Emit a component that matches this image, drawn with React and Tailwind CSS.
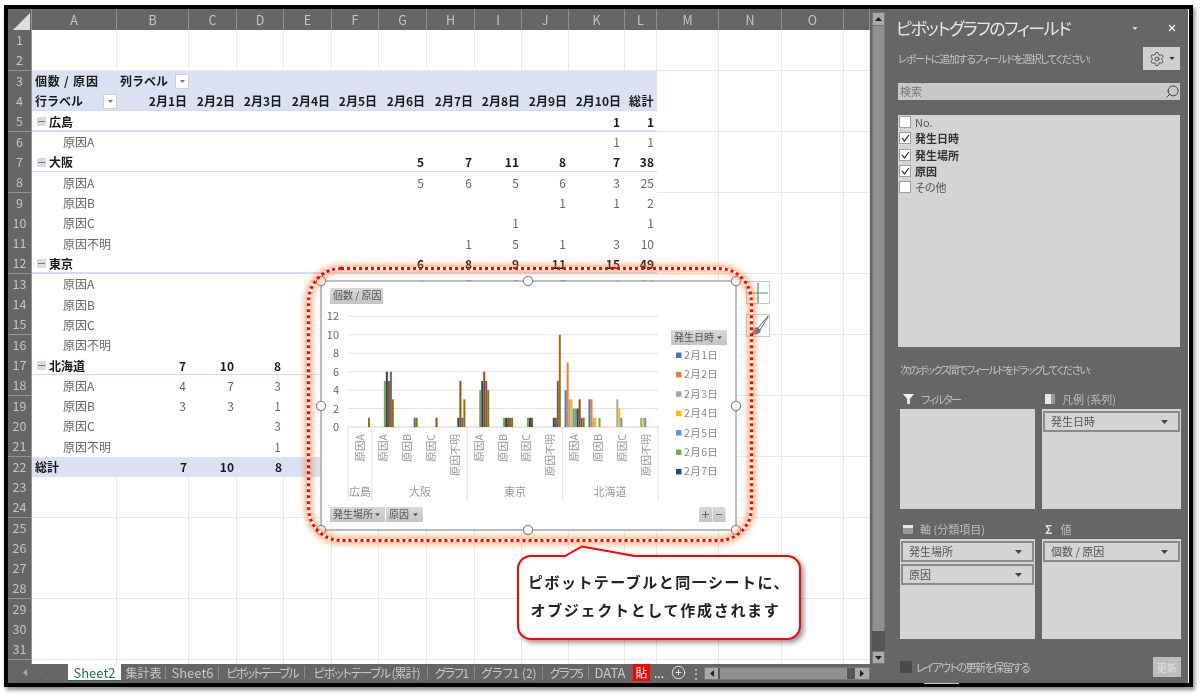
import React from "react";
import { Settings, Search, X, CirclePlus } from "lucide-react";

const COLS = "grid-cols-[24px_85px_72px_48px_47px_48px_47px_48px_48px_47px_47px_56px_32px_62px_63px_62px_26px]";
const LETTERS = ["A","B","C","D","E","F","G","H","I","J","K","L","M","N","O",""];
const DATES = ["2月1日","2月2日","2月3日","2月4日","2月5日","2月6日","2月7日","2月8日","2月9日","2月10日"];

const ROWS = {
  5: { group: "広島", v: { K: 1, L: 1 } },
  6: { item: "原因A", v: { K: 1, L: 1 } },
  7: { group: "大阪", v: { G: 5, H: 7, I: 11, J: 8, K: 7, L: 38 } },
  8: { item: "原因A", v: { G: 5, H: 6, I: 5, J: 6, K: 3, L: 25 } },
  9: { item: "原因B", v: { J: 1, K: 1, L: 2 } },
  10: { item: "原因C", v: { I: 1, L: 1 } },
  11: { item: "原因不明", v: { H: 1, I: 5, J: 1, K: 3, L: 10 } },
  12: { group: "東京", v: { G: 6, H: 8, I: 9, J: 11, K: 15, L: 49 } },
  13: { item: "原因A", v: { G: 4, H: 5, I: 6, J: 5, K: 4, L: 24 } },
  14: { item: "原因B", v: {} },
  15: { item: "原因C", v: {} },
  16: { item: "原因不明", v: {} },
  17: { group: "北海道", v: { B: 7, C: 10, D: 8 } },
  18: { item: "原因A", v: { B: 4, C: 7, D: 3 } },
  19: { item: "原因B", v: { B: 3, C: 3, D: 1 } },
  20: { item: "原因C", v: { D: 3 } },
  21: { item: "原因不明", v: { D: 1 } },
};

function Tri({ fill = "#444", w = 7, h = 4 }) {
  return (
    <svg width={w} height={h} viewBox="0 0 7 4" className="shrink-0">
      <path d="M0 0h7L3.5 4z" fill={fill} />
    </svg>
  );
}

function PivotDrop() {
  return (
    <div className="w-[14px] h-[15px] bg-white border border-[#d0d0d0] flex items-center justify-center ml-auto">
      <Tri fill="#777" w={5} h={3} />
    </div>
  );
}

function pivotCell(n, c) {
  const letter = LETTERS[c];
  const bg = n === 3 || n === 4 || n === 22 ? "bg-[#d9e1f2]" : "bg-white";
  const line = n === 4 || n === 5 || n === 7 || n === 12 || n === 17 ? "shadow-[inset_0_-2px_0_#cfdcf3]" : "";
  const base = `${bg} ${line} flex items-center whitespace-nowrap overflow-visible`;
  let body = null;
  if (n === 3 && c === 0) body = <span className="pl-[3px] font-bold text-[#1a1a1a] tracking-[0.8px]">個数 / 原因</span>;
  else if (n === 3 && c === 1) body = <><span className="pl-[3px] font-bold text-[#1a1a1a]">列ラベル</span><PivotDrop /></>;
  else if (n === 4 && c === 0) body = <><span className="pl-[3px] font-bold text-[#1a1a1a]">行ラベル</span><PivotDrop /></>;
  else if (n === 4 && c >= 1 && c <= 10) body = <span className={`ml-auto font-bold text-[#1a1a1a] ${c === 10 ? "pr-[4px]" : "pr-[2px]"}`}>{DATES[c - 1]}</span>;
  else if (n === 4 && c === 11) body = <span className="ml-auto pr-[3px] font-bold text-[#1a1a1a] tracking-[0.5px]">総計</span>;
  else if (n === 22 && c === 0) body = <span className="pl-[3px] font-bold text-[#1a1a1a]">総計</span>;
  else if (n === 22 && c === 1) body = <span className="ml-auto pr-[2px] font-bold text-[#1a1a1a]">7</span>;
  else if (n === 22 && c === 2) body = <span className="ml-auto pr-[3px] font-bold text-[#1a1a1a]">10</span>;
  else if (n === 22 && c === 3) body = <span className="ml-auto pr-[2px] font-bold text-[#1a1a1a]">8</span>;
  else if (ROWS[n]) {
    const r = ROWS[n];
    if (c === 0 && r.group) {
      body = (
        <>
          <span className="ml-[5px] mr-[3px] w-[9px] h-[9px] bg-[#d5dce6] flex items-center justify-center">
            <span className="w-[7px] h-px bg-[#777]" />
          </span>
          <span className="font-bold text-[#1a1a1a]">{r.group}</span>
        </>
      );
    } else if (c === 0) {
      body = <span className="pl-[31px] text-[#666]">{r.item}</span>;
    } else if (r.v[letter] !== undefined) {
      const pad = c === 10 ? "pr-[5px]" : "pr-[3px]";
      body = <span className={`ml-auto ${pad} ${r.group ? "font-bold text-[#1a1a1a]" : "text-[#666]"}`}>{r.v[letter]}</span>;
    }
  }
  return <div key={c} className={base}>{body}</div>;
}

function SheetRow({ n }) {
  return (
    <div className={`grid ${COLS} h-[20.32px] shrink-0 text-[12px] leading-[20px]`}>
      <div className="bg-[#666] border-b border-r border-[#949494] text-[#c4c4c4] text-[12.5px] flex items-center justify-center">
        {n <= 31 ? n : ""}
      </div>
      {LETTERS.map((_, c) =>
        n >= 3 && n <= 22 && c <= 11 ? (
          pivotCell(n, c)
        ) : (
          <div key={c} className="bg-white border-b border-r border-[#e9e9e9]" />
        )
      )}
    </div>
  );
}

function Sheet() {
  const rows = [];
  for (let n = 1; n <= 32; n++) rows.push(<SheetRow key={n} n={n} />);
  return (
    <div className="w-[862px] h-[655px] overflow-hidden flex flex-col">
      <div className={`grid ${COLS} h-[21px] shrink-0 text-[12.5px] text-[#c4c4c4] leading-[21px]`}>
        <div className="bg-[#666] border-r border-[#949494] flex items-end justify-end pr-px">
          <svg width="17" height="17" viewBox="0 0 17 17"><path d="M17 0v17H0z" fill="#dedede" /></svg>
        </div>
        {LETTERS.map((l, i) => (
          <div key={i} className="bg-[#666] border-r border-[#8e8e8e] text-center">{l}</div>
        ))}
      </div>
      {rows}
    </div>
  );
}

function VScroll() {
  return (
    <div className="w-[18px] h-[655px] bg-[#666] pl-[2px] pr-[3px] flex flex-col">
      <div className="h-[14px] mt-[3px] bg-[#a9a9a9] flex items-center justify-center border border-[#777]">
        <svg width="7" height="4" viewBox="0 0 7 4"><path d="M0 4h7L3.5 0z" fill="#222" /></svg>
      </div>
      <div className="h-[605px] bg-[#909090] border-x border-[#777]" />
      <div className="h-[20px] bg-[#565656]" />
      <div className="h-[13px] bg-[#a9a9a9] flex items-center justify-center border border-[#777]">
        <Tri fill="#222" />
      </div>
    </div>
  );
}

const TABS = [
  { t: "集計表", c: "w-[45px] text-[12px]" },
  { t: "Sheet6", c: "w-[53px] text-[13px]" },
  { t: "ピボットテーブル", c: "w-[86px] text-[12px] tracking-[-1.7px]" },
  { t: "ピボットテーブル (累計)", c: "w-[123px] text-[12px] tracking-[-1.1px]" },
  { t: "グラフ1", c: "w-[47px] text-[12px] tracking-[-1.2px]" },
  { t: "グラフ1 (2)", c: "w-[68px] text-[12px]" },
  { t: "グラフ5", c: "w-[46px] text-[12px] tracking-[-1.4px]" },
  { t: "DATA", c: "w-[42px] text-[13px]" },
];

function TabBar() {
  return (
    <div className="h-[19px] bg-[#666] flex items-start leading-[17px] text-[#c8c8c8] [font-feature-settings:'palt']">
      <div className="w-[60px] shrink-0 h-[17px] flex items-center pl-[15px] gap-[13px]">
        <svg width="4" height="7" viewBox="0 0 4 7"><path d="M4 0v7L0 3.5z" fill="#aaa" /></svg>
        <svg width="4" height="7" viewBox="0 0 4 7"><path d="M0 0v7l4-3.5z" fill="#2f8f55" /></svg>
      </div>
      <div className="w-[53px] shrink-0 h-[17px] bg-white text-[#217346] text-[13px] text-center border-b border-[#217346]">Sheet2</div>
      {TABS.map((tab, i) => (
        <div key={tab.t} className={`${tab.c} shrink-0 h-[17px] flex items-center justify-center relative whitespace-nowrap`}>
          <span>{tab.t}</span>
          {i < TABS.length - 1 && <span className="absolute right-0 top-[2px] w-px h-[13px] bg-[#8a8a8a]" />}
        </div>
      ))}
      <span className="ml-[2px] w-[17px] h-[17px] shrink-0 bg-[#ff0000] text-[12px] text-white text-center">貼</span>
      <span className="ml-[4px] text-[12px] text-white shrink-0">...</span>
      <span className="ml-[7px] mt-[1px] flex shrink-0"><CirclePlus size={15} color="#e4e4e4" strokeWidth={1.6} /></span>
      <span className="ml-[4px] text-[12px] text-[#ddd] shrink-0">⋮</span>
      <div className="ml-auto mr-[18px] mt-[3px] w-[166px] shrink-0 h-[13px] bg-[#565656] flex border border-[#777]">
        <div className="w-[13px] bg-[#a9a9a9] flex items-center justify-center">
          <svg width="4" height="7" viewBox="0 0 4 7"><path d="M4 0v7L0 3.5z" fill="#222" /></svg>
        </div>
        <div className="ml-[2px] w-[127px] bg-[#909090]" />
        <div className="ml-auto w-[14px] bg-[#a9a9a9] flex items-center justify-center">
          <svg width="4" height="7" viewBox="0 0 4 7"><path d="M0 0v7l4-3.5z" fill="#222" /></svg>
        </div>
      </div>
    </div>
  );
}

function Check({ on }) {
  return (
    <span className="w-[12px] h-[12px] shrink-0 bg-white border border-[#a0a0a0] flex items-center justify-center">
      {on && (
        <svg width="9" height="8" viewBox="0 0 9 8"><path d="M1 4l2.4 3L8 1" fill="none" stroke="#222" strokeWidth="1.2" /></svg>
      )}
    </span>
  );
}

function FieldItem({ label, on }) {
  return (
    <div className={`h-[16.3px] flex items-center gap-[4px] text-[11px] ${on ? "font-bold text-[#333]" : "text-[#555]"}`}>
      <Check on={on} />
      <span>{label}</span>
    </div>
  );
}

function FieldChip({ label }) {
  return (
    <div className="h-[21px] mx-px mt-[2px] border-2 border-[#8a8a8a] bg-[#d4d4d4] flex items-center pl-[6px] pr-[10px] text-[11px] text-[#555] justify-between">
      <span>{label}</span>
      <Tri fill="#444" />
    </div>
  );
}

function Zone({ icon, label, labelClass = "", items = [] }) {
  return (
    <div className="flex flex-col">
      <div className="h-[16px] flex items-center gap-[5px] pl-[3px] text-[11px] text-[#bdbdbd]">
        {icon}
        <span className={labelClass}>{label}</span>
      </div>
      <div className="mt-[2px] h-[100px] bg-[#d4d4d4]">
        {items.map((t) => <FieldChip key={t} label={t} />)}
      </div>
    </div>
  );
}

function Panel() {
  return (
    <div className="w-[300px] h-[674px] bg-[#666] pl-[10px] pr-[8px] flex flex-col [font-feature-settings:'palt'] relative">
      <div className="h-[38px] flex items-center -ml-[2px]">
        <span className="text-[17px] text-[#e8e8e8] whitespace-nowrap tracking-[-1.4px] leading-[24px]">ピボットグラフのフィールド</span>
        <span className="ml-auto mr-[29px] flex"><Tri fill="#ddd" w={6} h={3} /></span>
        <span className="mr-[3px] flex"><X size={10} color="#fff" strokeWidth={3} /></span>
      </div>
      <div className="h-[23px] flex items-center justify-between">
        <span className="text-[10.5px] text-[#c4c4c4] whitespace-nowrap tracking-[-1.25px]">レポートに追加するフィールドを選択してください:</span>
        <div className="w-[37px] h-[23px] bg-[#cfcfcf] flex items-center justify-center gap-[4px]">
          <Settings size={16} color="#333" strokeWidth={1.2} />
          <Tri fill="#333" w={6} h={3} />
        </div>
      </div>
      <div className="mt-[13px] h-[17px] bg-[#c8c8c8] flex items-center justify-between pl-[2px] text-[11px] text-[#777]">
        <span>検索</span>
        <span className="-scale-x-100 flex"><Search size={15} color="#222" strokeWidth={1.3} /></span>
      </div>
      <div className="mt-[15px] h-[232px] bg-[#d4d4d4] pl-[1px]">
        <div className="-mt-px">
          <FieldItem label="No." />
          <FieldItem label="発生日時" on />
          <FieldItem label="発生場所" on />
          <FieldItem label="原因" on />
          <FieldItem label="その他" />
        </div>
      </div>
      <div className="mt-[15px] h-[16px] pl-[2px] flex items-center text-[10.5px] text-[#c4c4c4] whitespace-nowrap tracking-[-1.45px]">次のボックス間でフィールドをドラッグしてください:</div>
      <div className="mt-[13px] ml-[2px] grid grid-cols-[135px_139px] gap-x-[7px] gap-y-[12px]">
        <Zone
          label="フィルター"
          labelClass="tracking-[-1.8px]"
          icon={<svg width="11" height="10" viewBox="0 0 11 10" className="mr-[2px]"><path d="M0 0h11L6.8 5v5H4.2V5z" fill="#f0f0f0" /></svg>}
        />
        <Zone
          label="凡例 (系列)"
          items={["発生日時"]}
          icon={<svg width="10" height="10" viewBox="0 0 10 10" className="mr-[2px]"><rect width="6" height="10" fill="#e8e8e8" /><rect x="6" width="4" height="10" fill="#999" /></svg>}
        />
        <Zone
          label="軸 (分類項目)"
          items={["発生場所", "原因"]}
          icon={<svg width="10" height="9" viewBox="0 0 10 9" className="mr-[2px]"><rect width="10" height="3" fill="#e8e8e8" /><rect y="3" width="10" height="6" fill="#999" /></svg>}
        />
        <Zone
          label="値"
          items={["個数 / 原因"]}
          icon={<span className="font-bold text-[#e0e0e0] text-[12px] mr-[3px]">Σ</span>}
        />
      </div>
      <div className="mt-[18px] ml-[2px] h-[20px] flex items-center">
        <span className="w-[12px] h-[12px] bg-[#4a4a4a]" />
        <span className="ml-[4px] text-[11px] text-[#c4c4c4] tracking-[-1.5px]">レイアウトの更新を保留する</span>
        <span className="ml-auto -mr-px w-[28px] h-[20px] bg-[#bdbdbd] text-[#e0e0e0] text-[10px] flex items-center justify-center">更新</span>
      </div>
      <span className="absolute left-[36px] bottom-[-1px] w-[35px] h-px bg-[#c8c8c8]" />
    </div>
  );
}

const SERIES = ["#4472c4","#ed7d31","#a5a5a5","#ffc000","#5b9bd5","#70ad47","#264478","#9e480e","#636363","#997300"];
const CATS = [
  ["原因A", { 10: 1 }],
  ["原因A", { 6: 5, 7: 6, 8: 5, 9: 6, 10: 3 }],
  ["原因B", { 9: 1, 10: 1 }],
  ["原因C", { 8: 1 }],
  ["原因不明", { 7: 1, 8: 5, 9: 1, 10: 3 }],
  ["原因A", { 6: 4, 7: 5, 8: 6, 9: 5, 10: 4 }],
  ["原因B", { 6: 1, 7: 1, 8: 1, 9: 1, 10: 1 }],
  ["原因C", { 6: 1, 7: 1, 8: 1 }],
  ["原因不明", { 7: 1, 8: 1, 9: 5, 10: 10 }],
  ["原因A", { 1: 4, 2: 7, 3: 3, 4: 3, 5: 2, 6: 2, 7: 2, 8: 3, 9: 1, 10: 1 }],
  ["原因B", { 1: 3, 2: 3, 3: 1, 4: 1, 6: 1 }],
  ["原因C", { 3: 3, 4: 2, 5: 1 }],
  ["原因不明", { 3: 1, 4: 1, 5: 1 }],
];
const X0 = 348, CW = 23.85, Y0 = 427, UNIT = 9.22;

function Chip({ x, y, w, h = 15, label, arrow }) {
  return (
    <g>
      <rect x={x} y={y} width={w} height={h} fill="url(#chip)" />
      <text x={x + 3} y={y + 11} fontSize="10" fill="#555">{label}</text>
      {arrow && <path d={`M${x + w - 10} ${y + 6.5}h5l-2.5 2.5z`} fill="#444" />}
    </g>
  );
}

function Chart() {
  const handles = [[321,281],[528,281],[736,281],[321,406],[736,406],[321,530],[528,530],[736,530]];
  return (
    <svg viewBox="311 271 436 270" className="absolute left-[311px] top-[271px] w-[436px] h-[270px]">
      <defs>
        <linearGradient id="chip" x1="0" y1="0" x2="0" y2="1">
          <stop offset="0" stopColor="#d8d8d8" />
          <stop offset="1" stopColor="#c4c4c4" />
        </linearGradient>
      </defs>
      <rect x="321" y="281" width="415" height="249" fill="#fff" stroke="#a8a8a8" strokeWidth="1.5" />
      <Chip x={330} y={288} w={53} h={16} label="個数 / 原因" />
      {[0,2,4,6,8,10,12].map((v) => (
        <g key={v}>
          <line x1={X0} x2="658" y1={Y0 - v * UNIT} y2={Y0 - v * UNIT} stroke={v ? "#e2e2e2" : "#d0d0d0"} strokeWidth="1" />
          <text x="339" y={Y0 - v * UNIT + 4} fontSize="11" fill="#666" textAnchor="end">{v}</text>
        </g>
      ))}
      {[0,1,5,9,13].map((i) => (
        <line key={i} x1={X0 + i * CW} x2={X0 + i * CW} y1={Y0} y2="501" stroke="#dcdcdc" strokeWidth="1" />
      ))}
      {CATS.map(([label, vals], i) => {
        const cx = X0 + i * CW;
        return (
          <g key={i}>
            {Object.entries(vals).map(([s, v]) => (
              <rect key={s} x={cx + 2 + (s - 1) * 2} y={Y0 - v * UNIT} width="2" height={v * UNIT} fill={SERIES[s - 1]} />
            ))}
            <text
              transform={`translate(${cx + 15.5} 434) rotate(-90)`}
              fontSize="10.5"
              fill="#999"
              textAnchor="end"
            >{label}</text>
          </g>
        );
      })}
      {[["広島",360],["大阪",420],["東京",515],["北海道",610]].map(([t, x]) => (
        <text key={t} x={x} y="496" fontSize="11" fill="#999" textAnchor="middle">{t}</text>
      ))}
      <Chip x={671} y={330} w={56} label="発生日時" arrow />
      {DATES.slice(0, 7).map((d, i) => (
        <g key={d}>
          <rect x="676" y={352.5 + i * 19.4} width="5.5" height="5.5" fill={SERIES[i]} />
          <text x="684" y={359 + i * 19.4} fontSize="10.5" fill="#888" letterSpacing="0.4">{d}</text>
        </g>
      ))}
      <Chip x={330} y={507} w={55} label="発生場所" arrow />
      <Chip x={386} y={507} w={37} label="原因" arrow />
      <rect x="699" y="507" width="13" height="15" fill="url(#chip)" />
      <rect x="712.5" y="507" width="13" height="15" fill="url(#chip)" />
      <path d="M702 514.5h7M705.5 511v7" stroke="#666" strokeWidth="1" />
      <path d="M716 514.5h6" stroke="#666" strokeWidth="1" />
      {handles.map(([x, y], i) => (
        <circle key={i} cx={x} cy={y} r="4.6" fill="#fff" stroke="#8a8a8a" strokeWidth="1.3" />
      ))}
    </svg>
  );
}

function SideButtons() {
  return (
    <>
      <div className="absolute left-[746px] top-[281px] w-[24px] h-[23px] bg-white border border-[#c8c8c8] flex items-center justify-center">
        <svg width="20" height="20" viewBox="0 0 20 20"><path d="M10 0v20M0 10h20" stroke="#3f9a63" strokeWidth="1.2" /></svg>
      </div>
      <div className="absolute left-[746px] top-[314px] w-[24px] h-[23px] bg-white border border-[#c8c8c8]">
        <svg width="22" height="22" viewBox="0 0 22 22">
          <path d="M21 1L11 13l2 2L21 2z" fill="#fff" stroke="#555" strokeWidth="0.9" />
          <path d="M10 12l4 4c-2 3-5 4-11 4 3-2 3-7 7-8z" fill="#6b6f86" />
        </svg>
      </div>
    </>
  );
}

function Callout() {
  return (
    <>
      <div className="absolute left-[517px] top-[555px] w-[284px] h-[85px] pb-[4px] bg-white border-2 border-[#ff0000] rounded-[14px] shadow-[3px_3px_5px_rgba(0,0,0,0.4)] flex flex-col items-center justify-center gap-[8px] text-[15px] leading-[20px] font-bold text-[#222]">
        <span className="tracking-[1.45px]">ピボットテーブルと同一シートに、</span>
        <span className="tracking-[1.7px] mr-[7px]">オブジェクトとして作成されます</span>
      </div>
      <svg viewBox="0 0 80 14" className="absolute left-[560px] top-[544px] w-[80px] h-[14px]">
        <path d="M5 13L22 3l53 10z" fill="#fff" />
        <path d="M5 12L22 2.5l53 9.5" fill="none" stroke="#ff0000" strokeWidth="2" />
      </svg>
    </>
  );
}

export default function App() {
  return (
    <div className="relative w-[1200px] h-[696px] bg-white overflow-hidden pl-[4px] pt-[5px] blur-[0.5px] font-['Noto_Sans_CJK_JP',sans-serif]">
      <div className="w-[1189px] h-[682px] border-4 border-black flex shadow-[2px_3px_4px_rgba(0,0,0,0.45)]">
        <div className="w-[880px] flex flex-col">
          <div className="flex">
            <Sheet />
            <VScroll />
          </div>
          <TabBar />
        </div>
        <Panel />
      </div>
      <Chart />
      <SideButtons />
      <div className="absolute left-[307px] top-[267px] w-[446px] h-[275px] rounded-[34px] border-[3px] border-dotted border-[#ff0000] shadow-[0_0_5px_3px_rgba(255,140,60,0.55),inset_0_0_5px_3px_rgba(255,140,60,0.55)]" />
      <Callout />
    </div>
  );
}
